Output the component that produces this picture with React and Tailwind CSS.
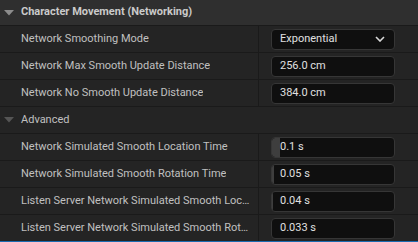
import React from 'react';

const font = { fontFamily: 'Roboto, "Noto Sans", sans-serif' };

function Caret({ dim }) {
  return (
    <svg width="10" height="6" viewBox="0 0 10 6" className="shrink-0">
      <path d="M0 0 L10 0 L5 5.5 Z" fill={dim ? '#555555' : '#8c8c8c'} />
    </svg>
  );
}

function ValueBox({ value, fill }) {
  return (
    <div className="relative flex items-center w-[124px] h-[21px] rounded-[4px] bg-[#0f0f0f] border border-[#363636] overflow-hidden">
      {fill > 0 && (
        <div
          className="absolute left-0 top-0 bottom-0 bg-[#3e3e3e] rounded-l-[3px]"
          style={{ width: fill }}
        />
      )}
      <span className="relative pl-[8px] text-[11px] text-[#e0e0e0]">{value}</span>
    </div>
  );
}

function PropRow({ label, children, last }) {
  return (
    <div
      className={`flex h-[27px] bg-[#242424] border-b ${
        last ? 'border-[#1b6bb0]' : 'border-[#1a1a1a]'
      }`}
    >
      <div className="w-[259px] shrink-0 flex items-center pl-[21px] pr-[5px] border-r border-[#1a1a1a]">
        <span className="truncate text-[11px] text-[#c0c0c0]">{label}</span>
      </div>
      <div className="flex-1 flex items-center pl-[12px]">{children}</div>
    </div>
  );
}

export default function App() {
  return (
    <div className="w-[418px] h-[242px] bg-[#242424] overflow-hidden" style={font}>
      <div className="flex items-center gap-[7px] h-[26px] pl-[4px] bg-[#2f2f2f] border-b border-[#1a1a1a]">
        <Caret />
        <span className="text-[11px] font-bold text-[#cacaca]">Character Movement (Networking)</span>
      </div>

      <PropRow label="Network Smoothing Mode">
        <div className="flex items-center justify-between w-[124px] h-[21px] rounded-[4px] bg-[#0f0f0f] border border-[#363636] pl-[8px] pr-[9px]">
          <span className="text-[11px] text-[#e0e0e0]">Exponential</span>
          <svg width="10" height="6" viewBox="0 0 10 6">
            <path d="M1 1 L5 5 L9 1" stroke="#d8d8d8" strokeWidth="1.6" fill="none" />
          </svg>
        </div>
      </PropRow>
      <PropRow label="Network Max Smooth Update Distance">
        <ValueBox value="256.0 cm" />
      </PropRow>
      <PropRow label="Network No Smooth Update Distance">
        <ValueBox value="384.0 cm" />
      </PropRow>

      <div className="flex items-center gap-[7px] h-[27px] pl-[4px] bg-[#242424] border-b border-[#1a1a1a]">
        <Caret dim />
        <span className="text-[11px] text-[#c0c0c0]">Advanced</span>
      </div>

      <PropRow label="Network Simulated Smooth Location Time">
        <ValueBox value="0.1 s" fill={8} />
      </PropRow>
      <PropRow label="Network Simulated Smooth Rotation Time">
        <ValueBox value="0.05 s" fill={2} />
      </PropRow>
      <PropRow label="Listen Server Network Simulated Smooth Location Time">
        <ValueBox value="0.04 s" fill={1} />
      </PropRow>
      <PropRow label="Listen Server Network Simulated Smooth Rotation Time" last>
        <ValueBox value="0.033 s" />
      </PropRow>
    </div>
  );
}
